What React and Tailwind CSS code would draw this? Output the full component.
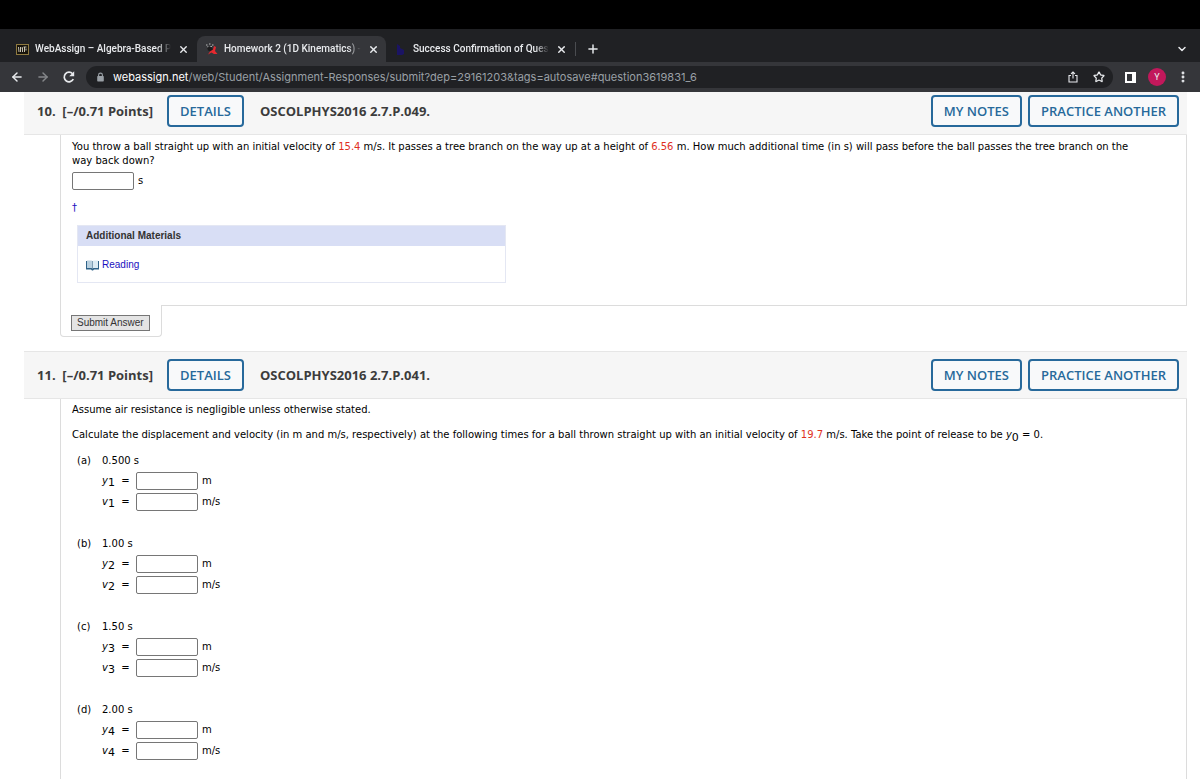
import { ArrowLeft, ArrowRight, X, Plus, ChevronDown, Star, EllipsisVertical } from "lucide-react";

const parts = [
    { id: "a", n: 1, time: "0.500 s" },
    { id: "b", n: 2, time: "1.00 s" },
    { id: "c", n: 3, time: "1.50 s" },
    { id: "d", n: 4, time: "2.00 s" },
];

function WebAssignIcon() {
    return (
        <svg className="w-[13px] h-[11px] shrink-0" viewBox="0 0 13 11">
            <rect x="0.5" y="0.5" width="12" height="10" fill="#17140c" stroke="#8f7a40" />
            <path d="M2.5 3l.5 5M4.500 3v5M6.500 8V3.500L5.500 4M8.500 3v5M7.500 3h3M10 4.500v2" fill="none" stroke="#d9d4c4" strokeWidth="0.9" />
        </svg>
    );
}

function HomeworkIcon() {
    return (
        <svg className="w-[13px] h-[13px] shrink-0" viewBox="0 0 13 13">
            <path d="M1 2h1.500M4 1h1.500M7 2h1.500M2 4h1.500M5 3.500h2" stroke="#b8b8b8" strokeWidth="1" />
            <path d="M2 4.500l4-1 2 3-2 2-3-1z" fill="#1c1c1e" />
            <path d="M9 3l2 1-1 4 2.500 3H9L6.500 9.500 3 11.500l2-3 3-2z" fill="#e5292f" />
        </svg>
    );
}

function ConfirmIcon() {
    return (
        <svg className="w-[13px] h-[13px] shrink-0" viewBox="0 0 13 13">
            <path d="M3 1l3 2v2l4 2v4l-2 1H3z" fill="#1b1464" />
        </svg>
    );
}

function ReloadIcon() {
    return (
        <svg className="w-[14px] h-[14px]" viewBox="0 0 14 14">
            <path d="M11.300 9.200A4.800 4.800 0 1 1 10.600 3.800" fill="none" stroke="currentColor" strokeWidth="1.7" />
            <path d="M12.200 1.300v5H7.200z" fill="currentColor" />
        </svg>
    );
}

function LockIcon() {
    return (
        <svg className="w-[9px] h-[10px] text-[#9aa0a6]" viewBox="0 0 9 10">
            <path d="M2.600 4.500V3a1.900 1.900 0 0 1 3.800 0v1.500" fill="none" stroke="currentColor" strokeWidth="1.100" />
            <rect x="1.200" y="4" width="6.600" height="5.500" rx="0.7" fill="currentColor" />
        </svg>
    );
}

function ShareIcon() {
    return (
        <svg className="w-3 h-3" viewBox="0 0 12 12" fill="none" stroke="currentColor" strokeWidth="1.100">
            <path d="M4 4.500H2v6.500h8V4.500H8M6 7.500V1M4 2.800L6 .9l2 1.900" />
        </svg>
    );
}

function BookIcon() {
    return (
        <svg className="w-[13px] h-[11px] shrink-0" viewBox="0 0 13 11">
            <path d="M0 1h13v8.500H8L7 10.500H6L5 9.500H0z" fill="#2f6288" />
            <path d="M1 .5h4.500L6.500 1v7.500L5.500 8H1z" fill="#b9d0df" />
            <path d="M12 .5H7.500L6.500 1v7.500l1-.5H12z" fill="#dcebf3" />
            <path d="M6.500 1v8" stroke="#6d8ea6" strokeWidth="0.7" />
        </svg>
    );
}

function Tab({ icon, title, active }) {
    return (
        <div className={`flex items-center w-[189px] h-[26px] px-2 rounded-t-lg ${active ? "bg-[#35363a]" : ""}`}>
            {icon}
            <span className="ml-1.5 w-[138px] whitespace-nowrap [mask-image:linear-gradient(to_right,black_90%,transparent)]">
                {title}
            </span>
            <button className="ml-[7px]" aria-label="Close tab">
                <X className="w-[11px] h-[11px]" strokeWidth={3} />
            </button>
        </div>
    );
}

function Browser() {
    return (
        <header className="bg-black pt-[29px] text-[#e8eaed] font-['Roboto',sans-serif]">
            <div className="flex items-center h-[33px] pt-[7px] pl-2 pr-3 bg-[#202124] text-[10px] font-medium">
                <Tab icon={<WebAssignIcon />} title="WebAssign – Algebra-Based P" />
                <Tab icon={<HomeworkIcon />} title="Homework 2 (1D Kinematics) -" active />
                <Tab icon={<ConfirmIcon />} title="Success Confirmation of Ques" />
                <button className="pl-2.5 border-l border-[#4a4c50]" aria-label="New tab">
                    <Plus className="w-[14px] h-[14px]" strokeWidth={2.5} />
                </button>
                <button className="ml-auto" aria-label="Search tabs">
                    <ChevronDown className="w-3 h-3" strokeWidth={3} />
                </button>
            </div>
            <div className="flex items-center h-[30px] pl-2.5 pr-2.5 bg-[#35363a]">
                <button aria-label="Back"><ArrowLeft className="w-[14px] h-[14px]" strokeWidth={2.5} /></button>
                <button className="ml-3 text-[#85878a]" aria-label="Forward"><ArrowRight className="w-[14px] h-[14px]" strokeWidth={2.5} /></button>
                <button className="ml-3 mr-2.5" aria-label="Reload"><ReloadIcon /></button>
                <div className="flex flex-1 items-center h-[22px] pl-2.5 pr-2 rounded-full bg-[#202124]">
                    <LockIcon />
                    <span className="flex-1 ml-2 text-[11px] text-[#9aa0a6] font-['Inter',sans-serif]">
                        <span className="text-white">webassign.net</span>
                        /web/Student/Assignment-Responses/submit?dep=29161203&amp;tags=autosave#question3619831_6
                    </span>
                    <button aria-label="Share"><ShareIcon /></button>
                    <button className="ml-3.5" aria-label="Bookmark"><Star className="w-3 h-3" strokeWidth={2.5} /></button>
                </div>
                <button className="ml-3" aria-label="Side panel">
                    <svg className="w-[11px] h-[11px]" viewBox="0 0 11 11">
                        <path fill="#fff" fillRule="evenodd" d="M0 0h11v11H0zM2 2v7h5V2z" />
                    </svg>
                </button>
                <button className="ml-3 w-[18px] h-[18px] rounded-full bg-[#c2185b] text-[9px]">Y</button>
                <button className="ml-2.5" aria-label="Menu"><EllipsisVertical className="w-[14px] h-[14px]" strokeWidth={3} /></button>
            </div>
        </header>
    );
}

function OutlineButton({ children }) {
    return (
        <button className="h-8 px-[11px] border-2 border-[#27699b] rounded bg-[#f8f9fa] font-semibold text-[#27699b] whitespace-nowrap">
            {children}
        </button>
    );
}

function QuestionBar({ number, name, first }) {
    return (
        <div className={`flex items-center pb-[7px] pl-[13px] pr-2 border-[#e6e6e6] bg-[#f6f6f6] text-[13px] text-[#3c3c3c] font-['Open_Sans',sans-serif] ${first ? "pt-[3px] border-b" : "pt-[7px] border-y"}`}>
            <h2 className="mr-3.5 font-bold whitespace-nowrap">{number}.&nbsp; [–/0.71 Points]</h2>
            <OutlineButton>DETAILS</OutlineButton>
            <span className="ml-4 mr-auto font-bold">{name}</span>
            <div className="flex gap-1.5">
                <OutlineButton>MY NOTES</OutlineButton>
                <OutlineButton>PRACTICE ANOTHER</OutlineButton>
            </div>
        </div>
    );
}

function Field({ label }) {
    return <input type="text" aria-label={label} className="w-[62px] h-[18px] px-1 border border-[#767676] rounded-xs bg-white" />;
}

function AnswerRow({ letter, n, unit }) {
    return (
        <div className="flex items-center h-[21px]">
            <span className="w-[34px] whitespace-nowrap">
                <i>{letter}</i><sub className="text-[11px]">{n}</sub>&nbsp; =
            </span>
            <Field label={`${letter}${n} in ${unit}`} />
            <span className="ml-1">{unit}</span>
        </div>
    );
}

export default function App() {
    return (
        <div className="min-h-screen bg-white text-[10px] leading-[14px] text-black font-['DejaVu_Sans',sans-serif]">
            <Browser />
            <main className="pl-6 pr-[13px]">
                <section>
                    <QuestionBar number={10} name="OSCOLPHYS2016 2.7.P.049." first />
                    <div className="ml-9">
                        <div className="h-[170px] pt-[5px] pl-[11px] pr-11 border-x border-[#dcdcdc]">
                            <p>
                                You throw a ball straight up with an initial velocity of <span className="text-[#e0301e]">15.4</span> m/s. It passes a tree branch on the way up at a height of <span className="text-[#e0301e]">6.56</span> m. How much additional time (in s) will pass before the ball passes the tree branch on the way back down?
                            </p>
                            <div className="flex items-center mt-1">
                                <Field label="Time in s" />
                                <span className="ml-1">s</span>
                            </div>
                            <a href="#footnote" className="block mt-[11px] text-[#1a10c0]">†</a>
                            <div className="mt-2.5 ml-[5px] w-[429px] border border-[#e4e7f3] font-['Liberation_Sans',Arial,sans-serif]">
                                <h3 className="px-2 py-[3px] bg-[#d8def5] font-bold text-[#333]">Additional Materials</h3>
                                <div className="flex px-2 pt-3 pb-2.5">
                                    <a href="#reading" className="flex items-center gap-[3px] text-[#1a10c0]">
                                        <BookIcon />
                                        Reading
                                    </a>
                                </div>
                            </div>
                        </div>
                        <div className="flex h-8">
                            <div className="w-[102px] pt-2.5 pl-2.5 border-x border-b border-[#dcdcdc] rounded-b-sm">
                                <button className="px-[5px] border border-[#767676] bg-[#e4e4e4] text-[#333] font-['Liberation_Sans',Arial,sans-serif]">
                                    Submit Answer
                                </button>
                            </div>
                            <div className="flex-1 h-1 border-t border-[#dcdcdc]" />
                        </div>
                    </div>
                </section>

                <section className="mt-3.5">
                    <QuestionBar number={11} name="OSCOLPHYS2016 2.7.P.041." />
                    <div className="ml-9 pt-1 pb-5 pl-[11px] border-x border-[#dcdcdc]">
                        <p>Assume air resistance is negligible unless otherwise stated.</p>
                        <p className="mt-[11px]">
                            Calculate the displacement and velocity (in m and m/s, respectively) at the following times for a ball thrown straight up with an initial velocity of <span className="text-[#e0301e]">19.7</span> m/s. Take the point of release to be <i>y</i><sub className="text-[11px]">0</sub> = 0.
                        </p>
                        <div className="mt-3 pl-[5px] space-y-[25px]">
                            {parts.map((part) => (
                                <div key={part.id}>
                                    <div className="flex mb-0.5">
                                        <span className="w-[25px]">({part.id})</span>
                                        {part.time}
                                    </div>
                                    <div className="pl-[25px]">
                                        <AnswerRow letter="y" n={part.n} unit="m" />
                                        <AnswerRow letter="v" n={part.n} unit="m/s" />
                                    </div>
                                </div>
                            ))}
                        </div>
                    </div>
                </section>
            </main>
        </div>
    );
}
